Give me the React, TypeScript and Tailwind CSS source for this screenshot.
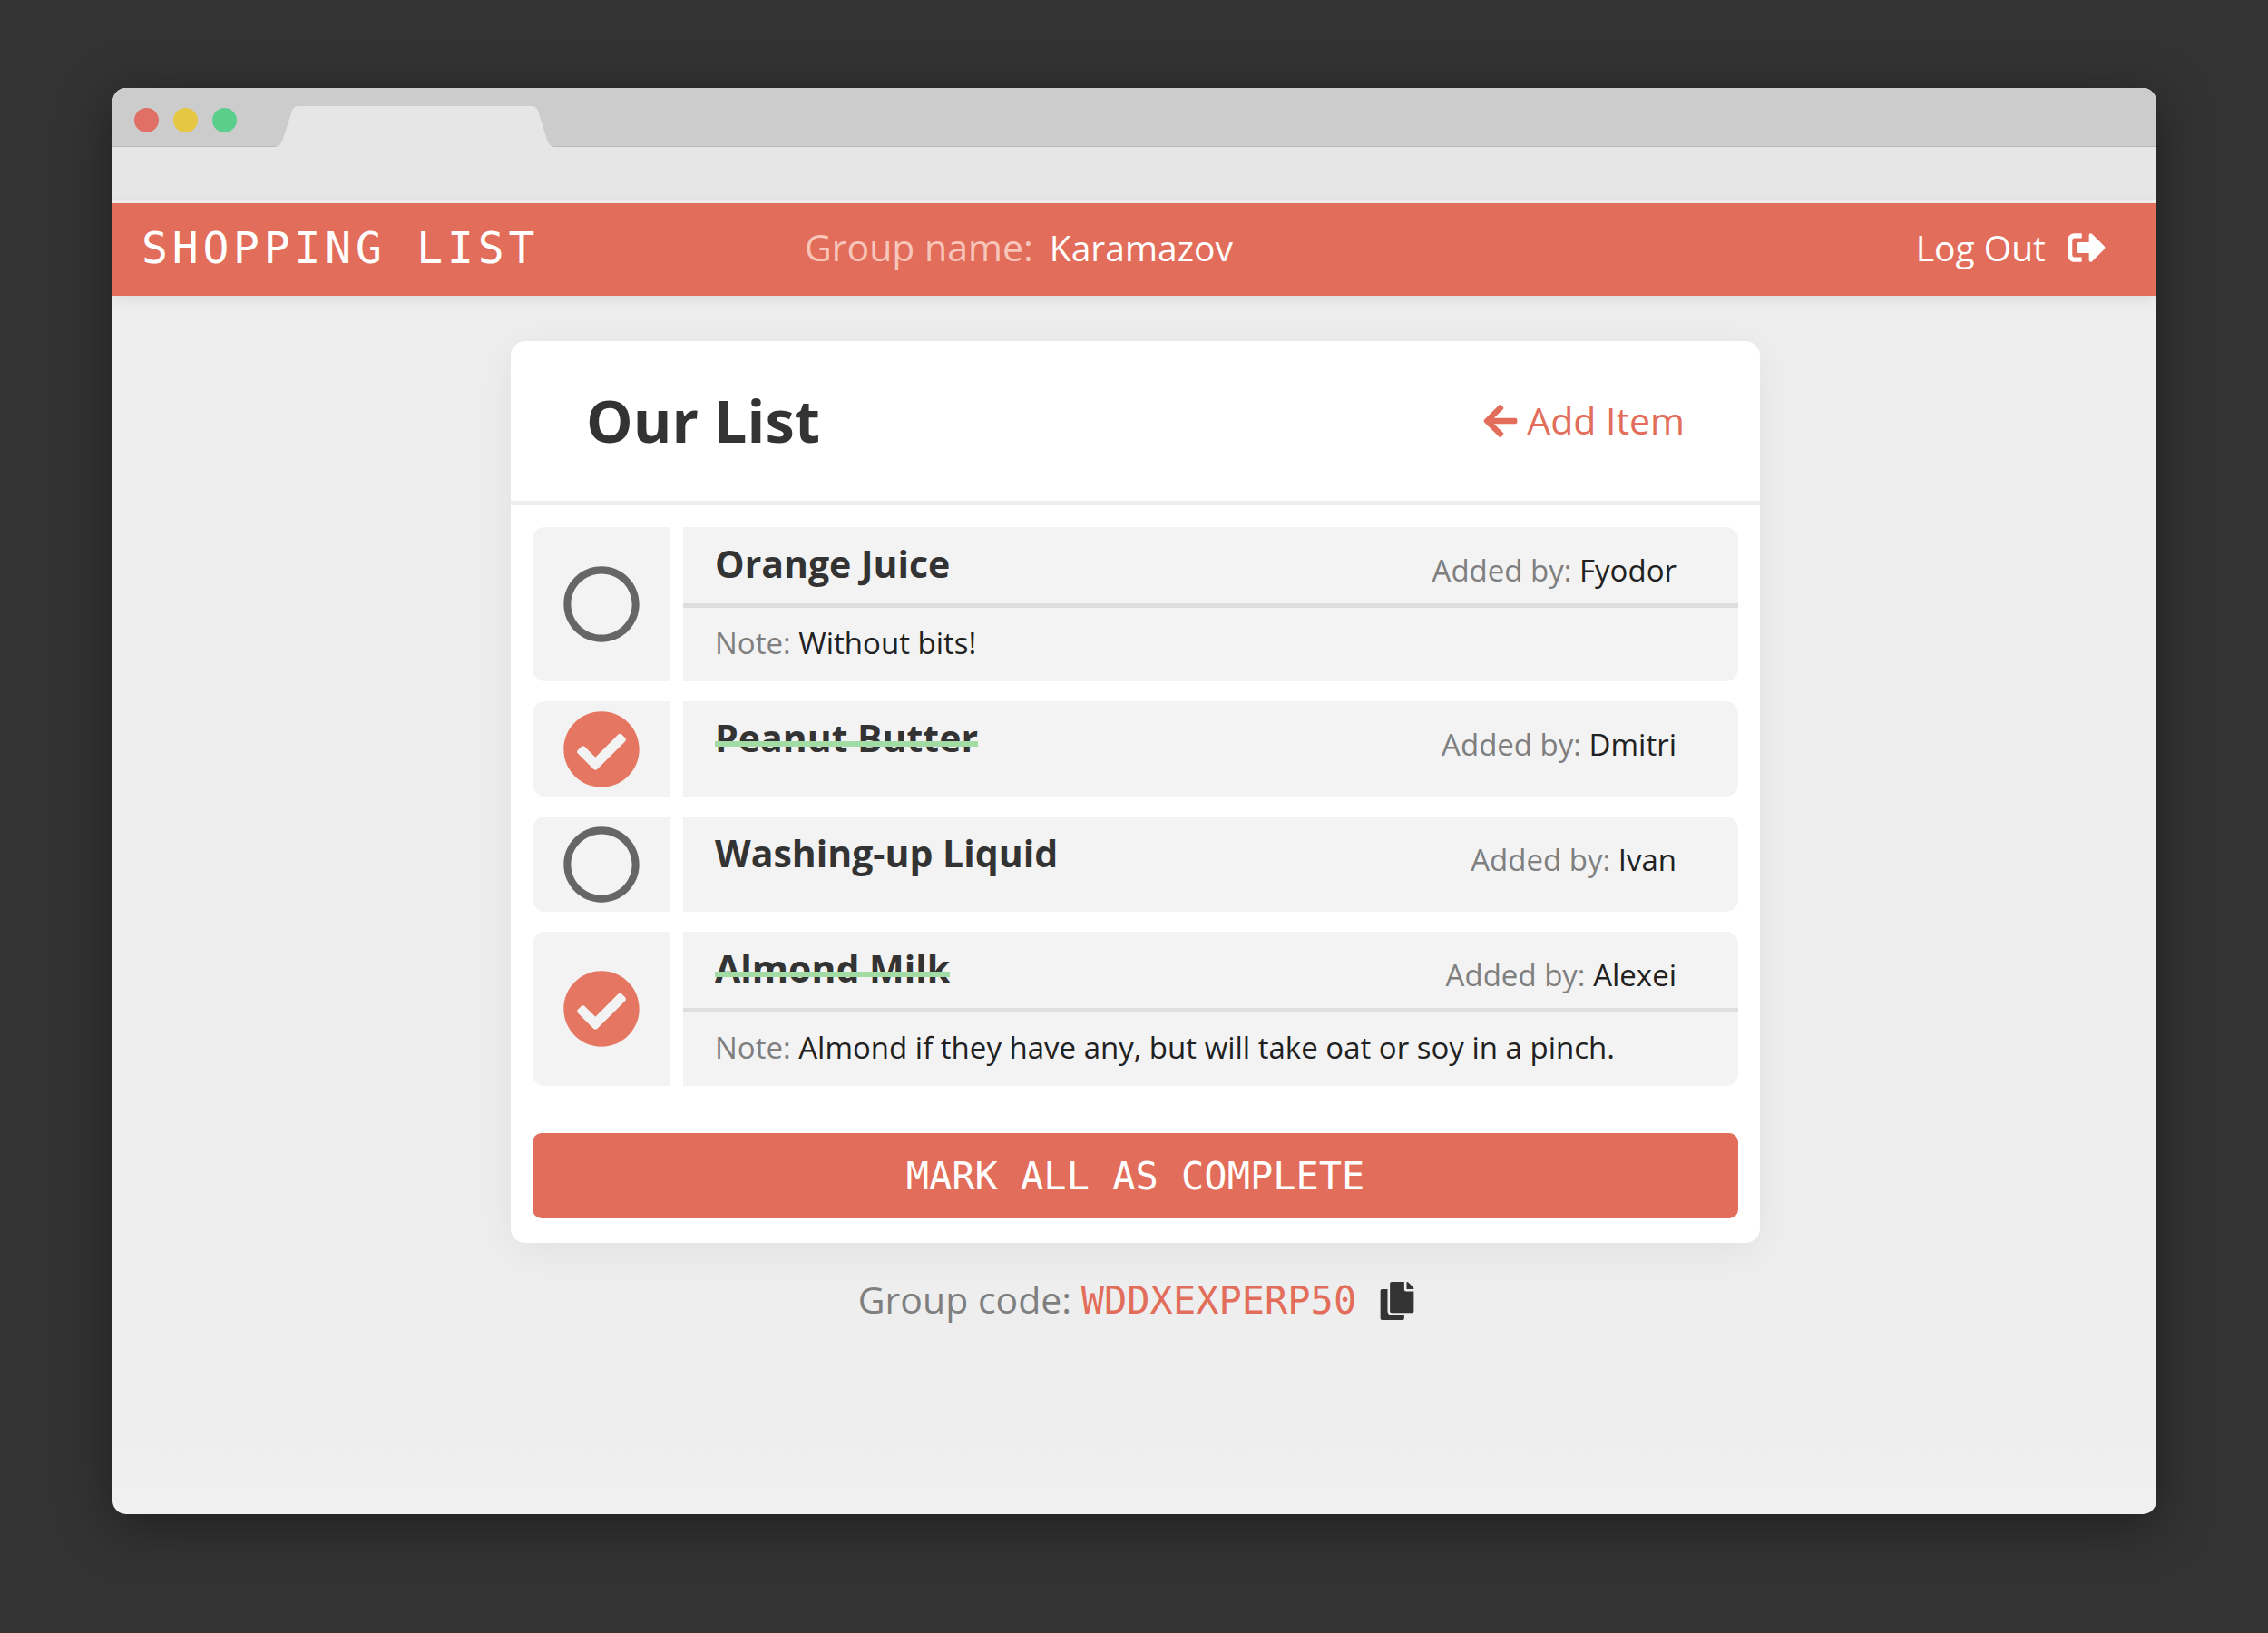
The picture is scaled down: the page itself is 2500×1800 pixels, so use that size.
import { useState } from "react";
import { FaArrowLeft, FaCheckCircle, FaCopy, FaRegCircle, FaSignOutAlt } from "react-icons/fa";

type Item = { id: string; name: string; addedBy: string; note?: string; done: boolean };

const initialItems: Item[] = [
  { id: "juice", name: "Orange Juice", addedBy: "Fyodor", note: "Without bits!", done: false },
  { id: "butter", name: "Peanut Butter", addedBy: "Dmitri", done: true },
  { id: "liquid", name: "Washing-up Liquid", addedBy: "Ivan", done: false },
  {
    id: "milk",
    name: "Almond Milk",
    addedBy: "Alexei",
    note: "Almond if they have any, but will take oat or soy in a pinch.",
    done: true,
  },
];

function BrowserBar() {
  return (
    <div>
      <div className="flex h-[65px] items-end border-b border-[#b9b9b9] bg-[#cccccc] pl-6">
        <div className="flex h-full items-center gap-4 pt-1.5">
          <span className="size-[27px] rounded-full bg-[#e07065]" />
          <span className="size-[27px] rounded-full bg-[#e6c744]" />
          <span className="size-[27px] rounded-full bg-[#5bce8c]" />
        </div>
        <svg className="-mb-px ml-[42px] h-[46px] w-[310px]" viewBox="0 0 310 46" aria-hidden="true">
          <path
            d="M0 46C6 45 7 42 9 37L19 6Q21 1 26 1H282Q288 1 290 6L300 38Q302 45 308 46Z"
            fill="#e6e6e6"
          />
        </svg>
      </div>
      <div className="h-[62px] border-b-[3px] border-[#f0f0f0] bg-[#e6e6e6]" />
    </div>
  );
}

function Header() {
  return (
    <header className="grid h-[102px] grid-cols-[731px_1fr_auto] items-center bg-[#e26d5a] pr-14 pb-1 pl-8 text-[39px] text-white shadow-[0_4px_16px_rgba(0,0,0,0.08)]">
      <h1 className="font-['DejaVu_Sans_Mono',monospace] text-[48px] tracking-widest">SHOPPING LIST</h1>
      <p className="flex items-baseline gap-[18px]">
        <span className="text-[41px] text-[#f7c5b9]">Group name:</span>
        <span className="font-medium">Karamazov</span>
      </p>
      <button type="button" className="flex items-center gap-6 font-medium">
        Log Out
        <FaSignOutAlt className="size-[42px]" />
      </button>
    </header>
  );
}

function ItemRow({ item, onToggle }: { item: Item; onToggle: () => void }) {
  return (
    <li className="flex gap-3.5">
      <label
        htmlFor={item.id}
        className="flex w-[152px] shrink-0 items-center justify-center rounded-l-[14px] bg-[#f3f3f3]"
      >
        <input
          id={item.id}
          type="checkbox"
          aria-label={item.name}
          checked={item.done}
          onChange={onToggle}
          className="size-0 appearance-none"
        />
        {item.done ? (
          <FaCheckCircle className="size-[86px] text-[#e57661]" />
        ) : (
          <FaRegCircle className="size-[86px] text-[#666666]" />
        )}
      </label>
      <div className="flex-1 rounded-r-[14px] bg-[#f3f3f3]">
        <div
          className={
            item.note
              ? "flex h-[84px] items-start justify-between pr-[68px] pl-[35px]"
              : "flex h-[105px] items-start justify-between pr-[68px] pl-[35px]"
          }
        >
          <h3
            className={
              item.done
                ? "relative mt-2 text-[41px] leading-16 font-bold after:absolute after:inset-x-0 after:top-9 after:h-1.5 after:bg-[#a3dba5]"
                : "mt-2 text-[41px] leading-16 font-bold"
            }
          >
            {item.name}
          </h3>
          <p className="mt-4 text-[33px] leading-16 text-[#212121]">
            <span className="text-[#7f7f7f]">Added by:</span> {item.addedBy}
          </p>
        </div>
        {item.note && (
          <p className="h-[86px] border-t-[5px] border-[#dedede] pl-[35px] text-[33px] leading-[78px] text-[#212121]">
            <span className="text-[#7f7f7f]">Note:</span> {item.note}
          </p>
        )}
      </div>
    </li>
  );
}

export default function App() {
  const [items, setItems] = useState(initialItems);
  const toggle = (id: string) =>
    setItems(items.map((item) => (item.id === id ? { ...item, done: !item.done } : item)));

  return (
    <div className="min-h-screen bg-[#333333] pt-[97px] pr-[123px] pb-[131px] pl-[124px] font-['Open_Sans',sans-serif] text-[#333333]">
      <div className="flex min-h-[1572px] flex-col overflow-hidden rounded-[15px] bg-linear-to-b from-[#eeeeee] from-95% to-[#f1f1f1] shadow-[0_12px_60px_rgba(0,0,0,0.4)]">
        <BrowserBar />
        <Header />
        <main className="flex flex-col items-center pt-[50px] pl-0.5">
          <section className="w-full max-w-[1377px] rounded-[16px] bg-white shadow-[0_8px_50px_rgba(0,0,0,0.06)]">
            <div className="flex h-[181px] items-center justify-between border-b-[5px] border-[#eeeeee] px-[83px]">
              <h2 className="text-[65px] font-bold">Our List</h2>
              <a href="#add" className="flex items-center gap-2 text-[41px] text-[#e26d5a]">
                <FaArrowLeft className="size-[42px]" />
                Add Item
              </a>
            </div>
            <div className="px-6 pt-6 pb-[27px]">
              <ul className="flex flex-col gap-[22px]">
                {items.map((item) => (
                  <ItemRow key={item.id} item={item} onToggle={() => toggle(item.id)} />
                ))}
              </ul>
              <button
                type="button"
                onClick={() => setItems(items.map((item) => ({ ...item, done: true })))}
                className="mt-[52px] h-[94px] w-full rounded-[10px] bg-[#e26d5a] font-['DejaVu_Sans_Mono',monospace] text-[42px] text-white"
              >
                MARK ALL AS COMPLETE
              </button>
            </div>
          </section>
          <div className="mt-8 flex items-center pl-1 text-[41px]">
            <p className="text-[#7f7f7f]">
              Group code:{" "}
              <span className="font-['DejaVu_Sans_Mono',monospace] text-[42px] text-[#e26d5a]">WDDXEXPERP50</span>
            </p>
            <button type="button" aria-label="Copy group code" className="ml-6">
              <FaCopy className="size-[42px]" />
            </button>
          </div>
        </main>
      </div>
    </div>
  );
}
